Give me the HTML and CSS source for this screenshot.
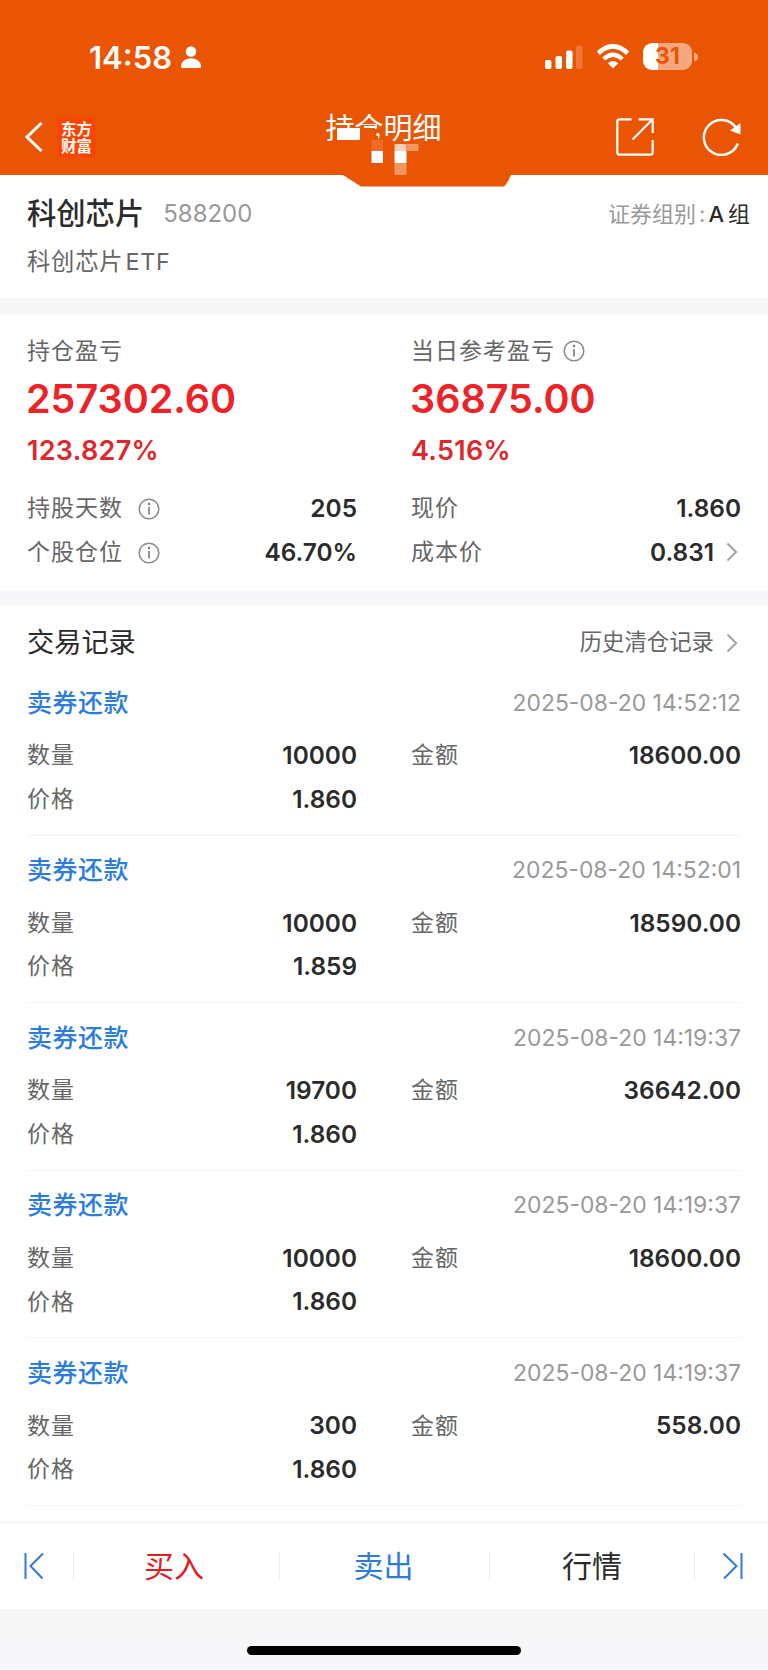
FILE: index.html
```html
<!DOCTYPE html>
<html lang="zh-CN">
<head>
    <meta charset="utf-8">
    <title>持仓明细</title>
    <meta name="viewport" content="width=device-width, initial-scale=1">
    <link rel="stylesheet" href="styles.css">
</head>
<body>

    <header class="header">
        <div class="status-bar">
            <div class="clock">
                <span>14:58</span>
                <svg width="22" height="24" viewBox="0 0 22 24" fill="#fff">
                    <circle cx="11" cy="6.500" r="5.300"/>
                    <path d="M1 21.500C1 17 5 13.300 11 13.300S21 17 21 21.500Q21 23 19.500 23H2.500Q1 23 1 21.500Z"/>
                </svg>
            </div>
            <div class="status-icons">
                <svg width="40" height="26" viewBox="0 0 40 26" fill="#fff">
                    <rect x="1" y="16" width="6.500" height="9" rx="2"/>
                    <rect x="11.500" y="12" width="6.500" height="13" rx="2"/>
                    <rect x="22" y="6.500" width="6.500" height="18.500" rx="2"/>
                    <rect x="32" y="1.500" width="6.500" height="23.500" rx="2" opacity=".2"/>
                </svg>
                <svg class="wifi" width="34" height="26" viewBox="0 0 34 26">
                    <path d="M2.300 9.200Q17-4.600 31.700 9.200" fill="none" stroke="#fff" stroke-width="4.600"/>
                    <path d="M7.700 15Q17 6.400 26.300 15" fill="none" stroke="#fff" stroke-width="4.400"/>
                    <path d="M11.800 19.200Q17 14.800 22.200 19.200L17 24.600Z" fill="#fff"/>
                </svg>
                <div class="battery">31</div>
                <svg width="4" height="10" viewBox="0 0 4 10"><path d="M0 0.500Q4 1.500 4 5T0 9.500Z" fill="#fff" opacity=".5"/></svg>
            </div>
        </div>
        <div class="nav">
            <div class="nav-left">
                <svg width="18" height="30" viewBox="0 0 18 30" fill="none" stroke="#fff" stroke-width="3"><path d="M16.500 1L2 15L16.500 29"/></svg>
                <div class="logo"><div>东方</div><div>财富</div></div>
            </div>
            <div class="nav-title">持仓明细
                <svg class="mosaic" width="100" height="61" viewBox="0 0 100 61">
                    <path d="M11 15H53V33H11Z M36 11H50V16H36Z" fill="#ea5504"/>
                    <rect x="12" y="14" width="23" height="12" fill="#fff"/>
                    <rect x="39" y="12" width="13" height="2" fill="#fff"/>
                    <rect x="51.500" y="19" width="2.500" height="3" fill="#fff"/>
                    <rect x="46.500" y="26" width="11.500" height="11" fill="#ee6c28"/>
                    <rect x="46.500" y="37" width="11.500" height="12" fill="#fff"/>
                    <rect x="69.500" y="30" width="12" height="7" fill="#fad0b8"/>
                    <rect x="69.500" y="37" width="12" height="12" fill="#fff"/>
                    <rect x="69.500" y="49" width="12" height="12" fill="#f29560"/>
                    <rect x="81.500" y="30" width="12" height="7" fill="#f29560"/>
                </svg>
            </div>
            <div class="nav-right">
                <svg width="38" height="38" viewBox="0 0 38 38" fill="none" stroke="#fff" stroke-width="2.200">
                    <path d="M15.500 1.300H3.500Q1.300 1.300 1.300 3.500V34.500Q1.300 36.700 3.500 36.700H34.500Q36.700 36.700 36.700 34.500V22M22.500 1.300H36.700V15M36.700 1.300L16.500 21.500"/>
                </svg>
                <svg width="40" height="38" viewBox="0 0 40 38">
                    <path d="M35.800 25.500A17.500 17.500 0 1 1 33.800 9.500" fill="none" stroke="#fff" stroke-width="2.500"/>
                    <path d="M38.500 5V16.500L28 12.500Z" fill="#fff"/>
                </svg>
            </div>
        </div>
        <svg class="header-tab" width="168" height="12" viewBox="0 0 168 12"><path d="M0 0L18 11.500H160Q163 11.500 168 0Z" fill="#ea5504"/></svg>
    </header>

    <section class="stock">
        <div class="row">
            <div class="stock-title"><span class="stock-name">科创芯片</span><span class="stock-code">588200</span></div>
            <div class="group">证券组别<i>:</i><b>A</b><b class="zu">组</b></div>
        </div>
        <div class="stock-full">科创芯片<span>ETF</span></div>
    </section>

    <section class="profit">
        <div class="col">
            <div class="label">持仓盈亏</div>
            <div class="big">257302.60</div>
            <div class="percent">123.827%</div>
            <div class="row line"><span class="label">持股天数 <svg class="info"><use href="#info"/></svg></span><span class="num">205</span></div>
            <div class="row line"><span class="label">个股仓位 <svg class="info"><use href="#info"/></svg></span><span class="num">46.70%</span></div>
        </div>
        <div class="col">
            <div class="label">当日参考盈亏 <svg class="info near"><use href="#info"/></svg></div>
            <div class="big">36875.00</div>
            <div class="percent">4.516%</div>
            <div class="row line"><span class="label">现价</span><span class="num">1.860</span></div>
            <div class="row line"><span class="label">成本价</span><span class="num">0.831<svg class="arrow"><use href="#arrow"/></svg></span></div>
        </div>
    </section>

    <section class="records">
        <div class="row records-head">
            <h2>交易记录</h2>
            <div class="history">历史清仓记录<svg class="arrow"><use href="#arrow"/></svg></div>
        </div>

        <div class="record">
            <div class="row record-head"><span class="type">卖券还款</span><span class="time">2025-08-20 14:52:12</span></div>
            <div class="grid">
                <div class="row"><span class="label">数量</span><span class="num">10000</span></div>
                <div class="row"><span class="label">金额</span><span class="num">18600.00</span></div>
                <div class="row"><span class="label">价格</span><span class="num">1.860</span></div>
            </div>
        </div>
        <div class="record">
            <div class="row record-head"><span class="type">卖券还款</span><span class="time">2025-08-20 14:52:01</span></div>
            <div class="grid">
                <div class="row"><span class="label">数量</span><span class="num">10000</span></div>
                <div class="row"><span class="label">金额</span><span class="num">18590.00</span></div>
                <div class="row"><span class="label">价格</span><span class="num">1.859</span></div>
            </div>
        </div>
        <div class="record">
            <div class="row record-head"><span class="type">卖券还款</span><span class="time">2025-08-20 14:19:37</span></div>
            <div class="grid">
                <div class="row"><span class="label">数量</span><span class="num">19700</span></div>
                <div class="row"><span class="label">金额</span><span class="num">36642.00</span></div>
                <div class="row"><span class="label">价格</span><span class="num">1.860</span></div>
            </div>
        </div>
        <div class="record">
            <div class="row record-head"><span class="type">卖券还款</span><span class="time">2025-08-20 14:19:37</span></div>
            <div class="grid">
                <div class="row"><span class="label">数量</span><span class="num">10000</span></div>
                <div class="row"><span class="label">金额</span><span class="num">18600.00</span></div>
                <div class="row"><span class="label">价格</span><span class="num">1.860</span></div>
            </div>
        </div>
        <div class="record">
            <div class="row record-head"><span class="type">卖券还款</span><span class="time">2025-08-20 14:19:37</span></div>
            <div class="grid">
                <div class="row"><span class="label">数量</span><span class="num">300</span></div>
                <div class="row"><span class="label">金额</span><span class="num">558.00</span></div>
                <div class="row"><span class="label">价格</span><span class="num">1.860</span></div>
            </div>
        </div>
    </section>

    <nav class="footer">
        <div class="step"><svg width="20" height="28" viewBox="0 0 20 28"><path d="M1.500 1V27M19 1.500L6.500 14L18.500 26.500"/></svg></div>
        <div class="action buy">买入</div>
        <div class="action sell">卖出</div>
        <div class="action">行情</div>
        <div class="step"><svg width="20" height="28" viewBox="0 0 20 28"><path d="M18.500 1V27M0.500 1.500L13.500 14L1 26.500"/></svg></div>
    </nav>

    <div class="home"><div class="home-bar"></div></div>

    <svg class="defs">
        <symbol id="info" viewBox="0 0 22 22">
            <circle cx="11" cy="11" r="9.800" fill="none" stroke="#8a8a8a" stroke-width="1.500"/>
            <circle cx="11" cy="6" r="1.200" fill="#777"/>
            <path d="M11 9V16.500" stroke="#777" stroke-width="1.600"/>
        </symbol>
        <symbol id="arrow" viewBox="0 0 12 20">
            <path d="M1.500 1.500L10 10L1.500 18.500" fill="none" stroke="#a8a8a8" stroke-width="2.200"/>
        </symbol>
    </svg>

</body>
</html>
```

FILE: styles.css
```css
* {
    box-sizing: border-box;
}

body {
    margin: 0;
    background-color: #fff;
    color: #2b2b2b;
    font-family: Inter, "Noto Sans CJK SC", sans-serif;
    font-size: 23px;
    line-height: 1;
}

.row {
    display: flex;
    justify-content: space-between;
    align-items: center;
}

/* header */
.header {
    position: relative;
    height: 175px;
    background-color: #ea5504;
    color: #fff;
}

.status-bar {
    display: flex;
    justify-content: space-between;
    height: 110px;
    padding: 42px 70px 0 89px;
}

.clock {
    display: flex;
    height: 30px;
    align-items: center;
    gap: 8px;
    font-size: 31px;
    font-weight: 600;
}

.status-icons {
    display: flex;
    align-items: center;
    height: 29px;
}

.wifi {
    margin: 0 13px 0 12px;
}

.battery {
    width: 49px;
    height: 27px;
    margin-right: 2px;
    border-radius: 9px;
    background: linear-gradient(to right, #fff 15px, #f5a880 15px);
    color: #ea5504;
    font-size: 23px;
    font-weight: 700;
    line-height: 27px;
    text-align: center;
}

.nav {
    display: grid;
    grid-template-columns: 1fr auto 1fr;
    padding: 0 26px 0 25px;
}

.nav-left {
    display: flex;
    align-items: center;
    gap: 15px;
    height: 54px;
}

.logo {
    width: 37px;
    height: 39px;
    padding-top: 2px;
    border-radius: 4px;
    background-color: #ff4300;
    box-shadow: 0 0 3px #ff4300;
    font-family: "Noto Sans CJK SC", sans-serif;
    font-size: 15.5px;
    font-weight: 700;
    line-height: 17px;
    text-align: center;
}

.nav-title {
    position: relative;
    padding-top: 1px;
    font-size: 29px;
    line-height: 35px;
}

.mosaic {
    position: absolute;
    left: 0;
    top: 4px;
}

.nav-right {
    display: flex;
    justify-content: flex-end;
    align-items: center;
    gap: 48px;
    height: 54px;
}

.header-tab {
    position: absolute;
    left: 343px;
    top: 175px;
}

/* stock */
.stock {
    height: 140px;
    padding: 18px 18px 0 27px;
    border-bottom: 17px solid #f7f7f7;
}

.stock .row {
    height: 42px;
}

.stock-title {
    display: flex;
    align-items: center;
}

.stock-name {
    font-size: 29.3px;
    font-weight: 500;
}

.stock-code {
    margin-left: 19px;
    padding-top: 1px;
    color: #999;
    font-size: 24px;
}

.group {
    color: #999;
    font-size: 22px;
}

.group i {
    margin: 0 3px;
    font-style: normal;
}

.group b {
    color: #2b2b2b;
    font-weight: 500;
}

.group .zu {
    margin-left: 4px;
    font-weight: 400;
}

.stock-full {
    margin-top: 15px;
    color: #666;
    font-size: 23.3px;
    letter-spacing: 0.8px;
}

.stock-full span {
    margin-left: 2px;
}

/* profit */
.profit {
    display: flex;
    height: 290px;
    padding: 18px 27px 0;
    gap: 54px;
    border-bottom: 14px solid #f7f7fa;
}

.col {
    flex: 1;
}

.label {
    display: flex;
    align-items: center;
    height: 36px;
    color: #666;
    font-size: 23px;
    letter-spacing: 1px;
}

.info {
    width: 22px;
    height: 22px;
    margin-left: 15px;
}

.info.near {
    margin-left: 8px;
}

.big {
    margin-top: 8px;
    margin-left: -1px;
    color: #ee2227;
    font-size: 39.5px;
    font-weight: 600;
    line-height: 44px;
}

.percent {
    margin: 8px 0 15px;
    color: #e0272b;
    font-size: 27px;
    font-weight: 600;
    line-height: 43px;
    letter-spacing: 0.3px;
}

.line {
    height: 43.8px;
}

.num {
    display: flex;
    align-items: center;
    padding-bottom: 1px;
    font-size: 24.4px;
    font-weight: 600;
}

.arrow {
    width: 12px;
    height: 20px;
    margin: 0 3px 0 12px;
}

/* records */
.records {
    padding: 14px 27px 0;
}

.records-head {
    height: 47px;
    margin-bottom: 2px;
}

.records-head h2 {
    margin: 0;
    font-size: 27.2px;
    font-weight: 400;
}

.history {
    display: flex;
    align-items: center;
    color: #666;
    font-size: 22.4px;
}

.record {
    height: 167.6px;
    padding-top: 13px;
    border-bottom: 1px solid #f4f4f4;
}

.record-head {
    height: 44px;
}

.type {
    color: #2b7de0;
    font-size: 25px;
    font-weight: 500;
    letter-spacing: 0.5px;
}

.time {
    color: #999;
    font-size: 22.9px;
}

.grid {
    display: grid;
    grid-template-columns: 1fr 1fr;
    column-gap: 54px;
    margin-top: 9px;
}

.grid .row {
    height: 43.6px;
}

/* footer */
.footer {
    display: grid;
    grid-template-columns: 73px 206px 210px 206px 73px;
    align-items: center;
    height: 87px;
    margin-top: 16px;
    border-top: 1px solid #f0f0f0;
}

.step {
    display: flex;
    justify-content: center;
    padding-right: 6px;
}

.step:last-child {
    padding: 0 0 0 2px;
}

.step svg {
    fill: none;
    stroke: #2f7bd8;
    stroke-width: 2;
}

.action {
    height: 30px;
    border-left: 1px solid #eee;
    font-size: 30px;
    line-height: 30px;
    text-align: center;
}

.action:nth-child(4) {
    border-right: 1px solid #eee;
}

.buy {
    padding-right: 5px;
    color: #e0201f;
}

.sell {
    padding-right: 2px;
    color: #2f7bd8;
}

.home {
    height: 60px;
    padding-top: 37px;
    background: linear-gradient(#f6f6f6, #f6f7fb);
}

.home-bar {
    width: 274px;
    height: 9px;
    margin: 0 auto;
    border-radius: 5px;
    background-color: #000;
}

.defs {
    display: none;
}
```
